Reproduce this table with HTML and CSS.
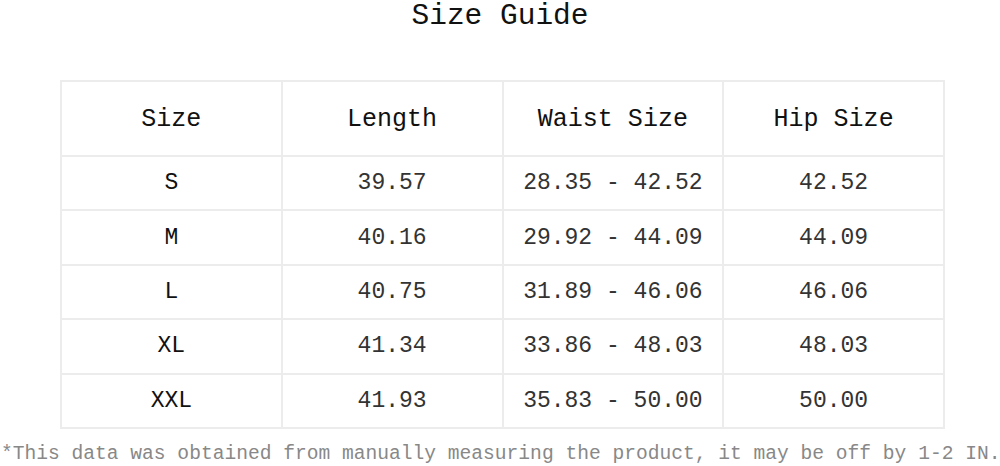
FILE: index.html
```html
<!DOCTYPE html>
<html>
<head>
<meta charset="utf-8">
<link rel="stylesheet" href="styles.css">
</head>
<body>
<div class="page">
  <h1 class="title">Size Guide</h1>
  <table class="guide">
    <thead>
      <tr><th>Size</th><th>Length</th><th>Waist Size</th><th>Hip Size</th></tr>
    </thead>
    <tbody>
      <tr><td class="sz">S</td><td>39.57</td><td>28.35 - 42.52</td><td>42.52</td></tr>
      <tr><td class="sz">M</td><td>40.16</td><td>29.92 - 44.09</td><td>44.09</td></tr>
      <tr><td class="sz">L</td><td>40.75</td><td>31.89 - 46.06</td><td>46.06</td></tr>
      <tr><td class="sz">XL</td><td>41.34</td><td>33.86 - 48.03</td><td>48.03</td></tr>
      <tr><td class="sz">XXL</td><td>41.93</td><td>35.83 - 50.00</td><td>50.00</td></tr>
    </tbody>
  </table>
  <p class="note">*This data was obtained from manually measuring the product, it may be off by 1-2 IN.</p>
</div>
</body>
</html>
```
FILE: styles.css
```css
html, body {
  margin: 0;
  padding: 0;
  background: #ffffff;
}
.page {
  width: 1000px;
  height: 466px;
  display: flex;
  flex-direction: column;
  align-items: center;
  font-family: "Liberation Mono", monospace;
  overflow: hidden;
}
.title {
  margin: 0;
  font-weight: normal;
  font-size: 29.5px;
  line-height: 32px;
  color: #111;
  height: 82px;
}
.guide {
  align-self: flex-start;
  margin-left: 60px;
  width: 885px;
  border-collapse: collapse;
  table-layout: fixed;
  border: 2px solid #ececec;
}
.guide th, .guide td {
  border: 2px solid #ececec;
  text-align: center;
  padding: 0;
  font-weight: normal;
}
.guide th {
  height: 71px;
  padding-top: 2px;
  font-size: 25px;
  color: #111;
}
.guide td {
  height: 52.4px;
  font-size: 23px;
  color: #333;
}
.guide td.sz {
  color: #111;
}
.note {
  align-self: flex-start;
  margin: 13px 0 0 1px;
  font-size: 19.6px;
  line-height: 24px;
  color: #888;
  white-space: nowrap;
}
```
